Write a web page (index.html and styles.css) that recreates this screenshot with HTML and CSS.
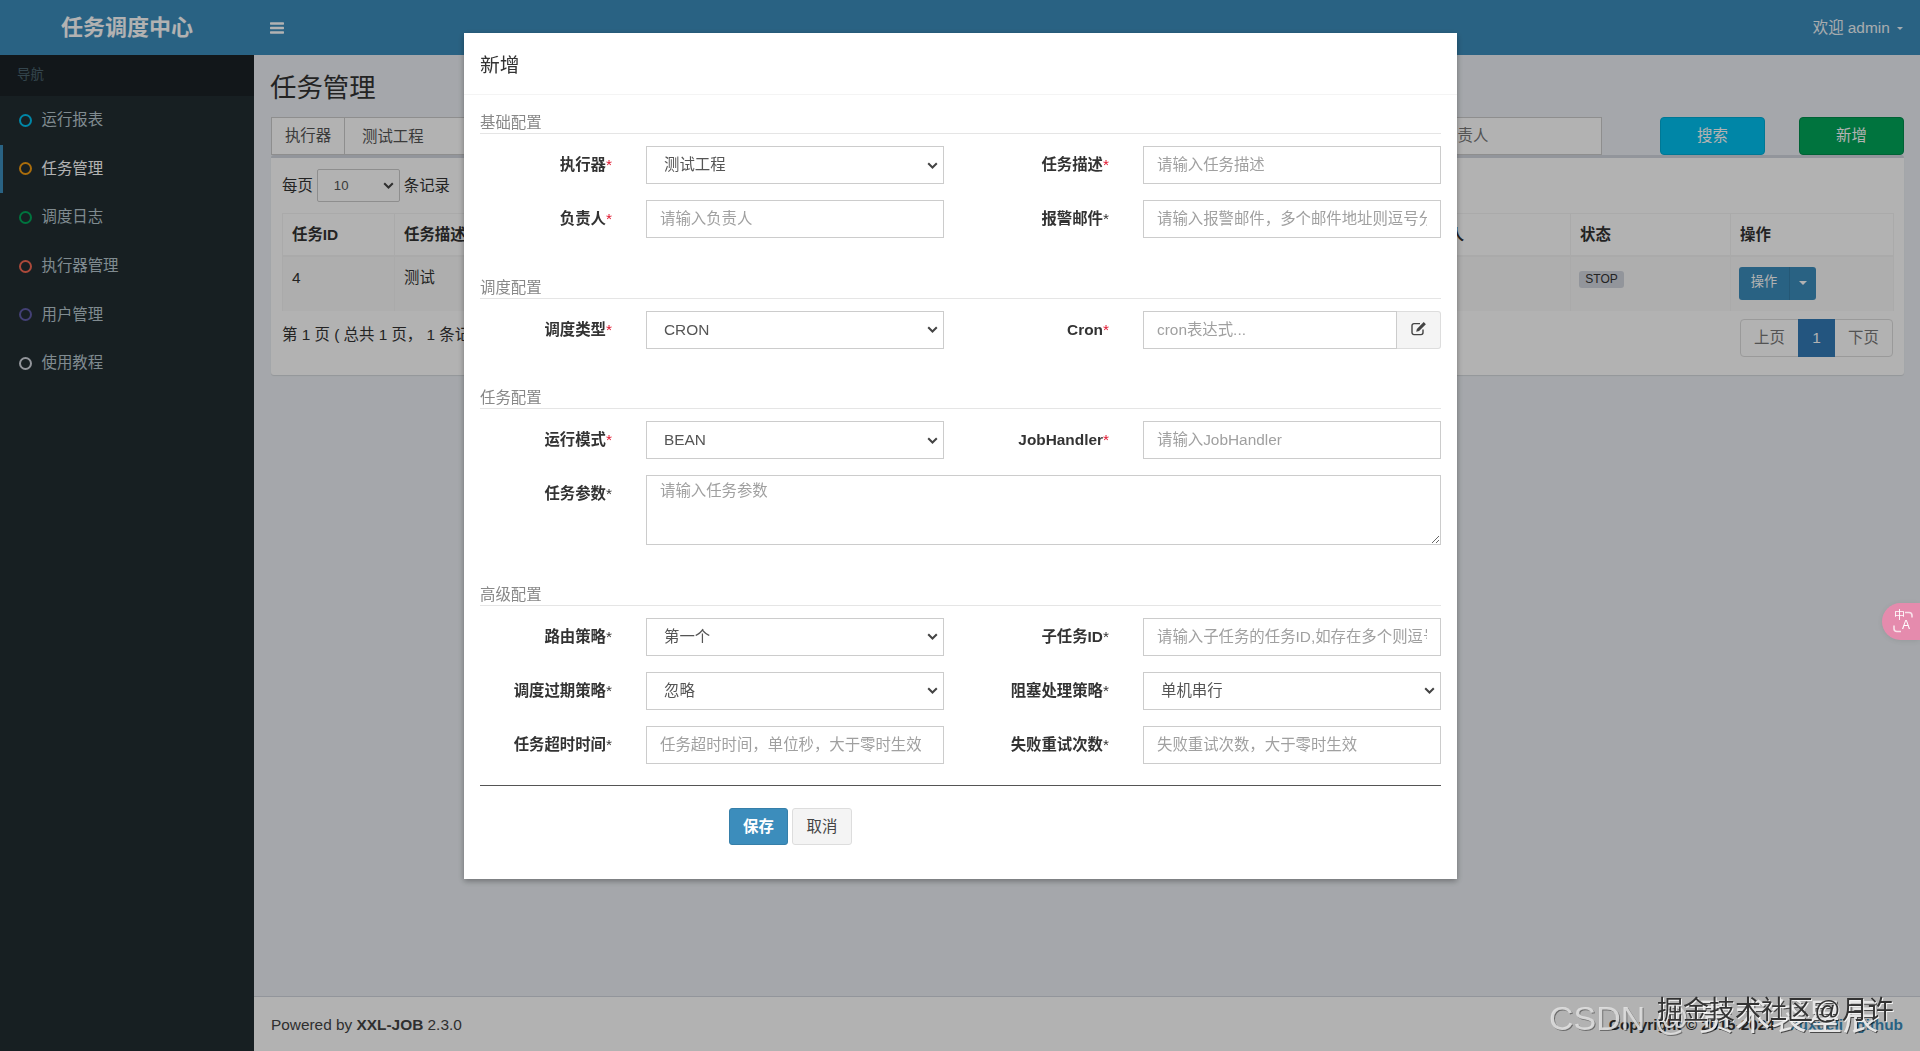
FILE: index.html
```html
<!DOCTYPE html>
<html lang="zh-CN">
<head>
<meta charset="utf-8">
<title>任务调度中心</title>
<link rel="stylesheet" href="styles.css">
</head>
<body>
<div class="app">
  <header class="topbar">
    <div class="logo">任务调度中心</div>
    <div class="navbar">
      <svg class="toggle" width="14" height="12" viewBox="0 0 14 12"><rect width="14" height="2.4" y="0.3" rx=".6"/><rect width="14" height="2.4" y="4.8" rx=".6"/><rect width="14" height="2.4" y="9.3" rx=".6"/></svg>
      <div class="user">欢迎 admin <span class="caret"></span></div>
    </div>
  </header>
  <div class="below">
    <aside class="sidebar">
      <div class="nav-head">导航</div>
      <ul class="menu">
        <li class="item"><i class="dot dot-aqua"></i>运行报表</li>
        <li class="item active"><i class="dot dot-orange"></i>任务管理</li>
        <li class="item"><i class="dot dot-green"></i>调度日志</li>
        <li class="item"><i class="dot dot-red"></i>执行器管理</li>
        <li class="item"><i class="dot dot-purple"></i>用户管理</li>
        <li class="item"><i class="dot dot-gray"></i>使用教程</li>
      </ul>
    </aside>
    <main class="main">
      <div class="content">
        <h1 class="page-title">任务管理</h1>
        <div class="filters">
          <div class="filter-groups">
            <div class="group"><span class="addon">执行器</span><select class="control"><option>测试工程</option></select></div>
            <div class="group"><span class="addon">状态</span><select class="control"><option>全部</option></select></div>
            <div class="group"><input class="control" placeholder="请输入任务描述"></div>
            <div class="group"><input class="control" placeholder="请输入JobHandler"></div>
            <div class="group"><input class="control" placeholder="请输入负责人"></div>
          </div>
          <button class="btn btn-search">搜索</button>
          <button class="btn btn-add">新增</button>
        </div>
        <section class="box">
          <div class="length"><span>每页</span><select class="length-select"><option>10</option></select><span>条记录</span></div>
          <table class="table">
            <thead>
              <tr><th class="c-id">任务ID</th><th class="c-desc">任务描述</th><th class="c-type">调度类型</th><th class="c-mode">运行模式</th><th class="c-owner">负责人</th><th class="c-status">状态</th><th class="c-op">操作</th></tr>
            </thead>
            <tbody>
              <tr>
                <td>4</td><td>测试</td><td>CRON</td><td>BEAN</td><td></td>
                <td><span class="label">STOP</span></td>
                <td><span class="split"><span class="split-main">操作</span><span class="split-caret"><span class="caret"></span></span></span></td>
              </tr>
            </tbody>
          </table>
          <div class="table-foot">
            <div class="info">第 1 页 ( 总共 1 页， 1 条记录 )</div>
            <div class="pager"><span class="page">上页</span><span class="page page-on">1</span><span class="page">下页</span></div>
          </div>
        </section>
      </div>
      <footer class="footer">
        <div>Powered by <b>XXL-JOB</b> 2.3.0</div>
        <div class="copy"><b>Copyright © 2015-2024</b><b class="links"><a>xuxueli</a><a>github</a></b></div>
      </footer>
    </main>
  </div>
</div>

<div class="backdrop"></div>

<div class="modal-layer">
  <div class="modal">
    <div class="modal-head">新增</div>
    <form class="modal-body">
      <h4 class="sec sec-first">基础配置</h4>
      <div class="fields">
        <label class="lbl">执行器<em>*</em></label>
        <select class="field"><option>测试工程</option></select>
        <label class="lbl">任务描述<em>*</em></label>
        <input class="field" placeholder="请输入任务描述">
        <label class="lbl">负责人<em>*</em></label>
        <input class="field" placeholder="请输入负责人">
        <label class="lbl">报警邮件<em class="dk">*</em></label>
        <input class="field" placeholder="请输入报警邮件，多个邮件地址则逗号分隔">
      </div>

      <h4 class="sec">调度配置</h4>
      <div class="fields">
        <label class="lbl">调度类型<em>*</em></label>
        <select class="field"><option>CRON</option></select>
        <label class="lbl">Cron<em>*</em></label>
        <div class="cron">
          <input class="field cron-input" placeholder="cron表达式...">
          <span class="cron-btn">
            <svg width="16" height="15" viewBox="0 0 16 15"><path d="M12 8.6V11.6a2 2 0 0 1-2 2H3a2 2 0 0 1-2-2V4.6a2 2 0 0 1 2-2h6" fill="none" stroke="#444" stroke-width="1.4"/><path d="M5.2 10.8l.7-2.9L12.7 1.1l2.2 2.2-6.8 6.8z" fill="#444"/></svg>
          </span>
        </div>
      </div>

      <h4 class="sec">任务配置</h4>
      <div class="fields">
        <label class="lbl">运行模式<em>*</em></label>
        <select class="field"><option>BEAN</option></select>
        <label class="lbl">JobHandler<em>*</em></label>
        <input class="field" placeholder="请输入JobHandler">
        <label class="lbl">任务参数<em class="dk">*</em></label>
        <textarea class="area" placeholder="请输入任务参数"></textarea>
      </div>

      <h4 class="sec">高级配置</h4>
      <div class="fields">
        <label class="lbl">路由策略<em class="dk">*</em></label>
        <select class="field"><option>第一个</option></select>
        <label class="lbl">子任务ID<em class="dk">*</em></label>
        <input class="field" placeholder="请输入子任务的任务ID,如存在多个则逗号分隔">
        <label class="lbl">调度过期策略<em class="dk">*</em></label>
        <select class="field"><option>忽略</option></select>
        <label class="lbl">阻塞处理策略<em class="dk">*</em></label>
        <select class="field"><option>单机串行</option></select>
        <label class="lbl">任务超时时间<em class="dk">*</em></label>
        <input class="field" placeholder="任务超时时间，单位秒，大于零时生效">
        <label class="lbl">失败重试次数<em class="dk">*</em></label>
        <input class="field" placeholder="失败重试次数，大于零时生效">
      </div>

      <hr class="rule">
      <div class="actions">
        <button type="button" class="act act-save">保存</button>
        <button type="button" class="act act-cancel">取消</button>
      </div>
    </form>
  </div>
</div>

<div class="translate">
  <span class="tr-zh">中</span><span class="tr-en">A</span>
  <svg class="tr-arc" width="24" height="24" viewBox="0 0 24 24"><path d="M14 2.5h4a3 3 0 0 1 3 3v2M10 21.5H6a3 3 0 0 1-3-3v-3" fill="none" stroke="#fff" stroke-width="1.6"/></svg>
</div>

<div class="mark mark-two">CSDN @ <span class="mark-big">贾术袋星辰</span></div>
<div class="mark mark-one">掘金技术社区 @ 月许</div>
</body>
</html>
```

FILE: styles.css
```css
* { box-sizing: border-box; }
html, body { margin: 0; height: 100%; }
body {
  font-family: "Liberation Sans", "Noto Sans CJK SC", sans-serif;
  font-size: 15.4px;
  line-height: 22px;
  color: #333;
  background: #ecf0f5;
  overflow: hidden;
}
button, input, select, textarea { font: inherit; }
ul { list-style: none; margin: 0; padding: 0; }
select.field, select.length-select {
  appearance: none;
  background-image: url("data:image/svg+xml,%3Csvg xmlns='http://www.w3.org/2000/svg' width='11' height='7' viewBox='0 0 11 7'%3E%3Cpath d='M1.2 1.2l4.3 4.3 4.3-4.3' fill='none' stroke='%23444' stroke-width='2'/%3E%3C/svg%3E");
  background-repeat: no-repeat;
  background-position: right 5px center;
}

.app { height: 1051px; display: flex; flex-direction: column; }

/* top bar */
.topbar { height: 55px; display: flex; background: #3c8dbc; color: #fff; flex: none; }
.logo { width: 254px; text-align: center; font-size: 22px; font-weight: 700; line-height: 55px; flex: none; }
.navbar { flex: 1; display: flex; align-items: center; justify-content: space-between; padding: 0 17px 0 16px; }
.toggle { fill: #fff; }
.user { font-size: 15.4px; color: #f0f6fa; }
.caret { display: inline-block; width: 0; height: 0; margin-left: 4px; vertical-align: middle; border-top: 4.4px solid; border-left: 4.4px solid transparent; border-right: 4.4px solid transparent; }
.user .caret { margin-left: 3px; border-top-width: 3.6px; border-left-width: 3.6px; border-right-width: 3.6px; }

.below { flex: 1; display: flex; min-height: 0; }

/* sidebar */
.sidebar { width: 254px; background: #222d32; flex: none; }
.nav-head { height: 41px; padding-left: 17px; line-height: 39px; font-size: 13.4px; color: #4b646f; background: #1a2226; }
.item { height: 48.6px; display: flex; align-items: center; border-left: 3px solid transparent; padding-left: 16px; color: #b8c7ce; }
.item.active { border-left-color: #3c8dbc; color: #fff; }
.dot { width: 13px; height: 13px; border-radius: 50%; border: 2.6px solid; margin-right: 9.5px; flex: none; }
.dot-aqua { border-color: #00c0ef; }
.dot-orange { border-color: #f39c12; }
.dot-green { border-color: #00a65a; }
.dot-red { border-color: #f56954; }
.dot-purple { border-color: #605ca8; }
.dot-gray { border-color: #d2d6de; }

/* main */
.main { flex: 1; display: flex; flex-direction: column; min-width: 0; }
.content { flex: 1; padding: 16px 16px 0 17px; }
.page-title { margin: 0 0 12px -1px; font-size: 26.4px; line-height: 34px; font-weight: 400; color: #333; }

.filters { display: flex; height: 38px; }
.filter-groups { width: 1331px; display: grid; grid-template-columns: 1fr 1fr 1fr 1fr 220px; column-gap: 16px; flex: none; margin-right: 58px; }
.group { display: flex; min-width: 0; }
.addon { width: 73px; flex: none; background: #fff; border: 1px solid #ccc; border-right: 0; text-align: center; line-height: 36px; color: #555; }
.control { flex: 1; min-width: 0; width: 100%; height: 38px; background: #fff; border: 1px solid #ccc; border-radius: 0; padding: 0 13px; color: #555; }
.control::placeholder { color: #777; opacity: 1; }
.btn { width: 105px; height: 38px; border: 1px solid; border-radius: 4px; color: #fff; flex: none; padding: 0; }
.btn-search { background: #00c0ef; border-color: #00acd6; }
.btn-add { background: #00a65a; border-color: #008d4c; margin-left: 34px; }

.box { height: 220px; background: #fff; border-top: 3px solid #d2d6de; border-radius: 3px; box-shadow: 0 1px 1px rgba(0,0,0,.1); padding: 11px 11px 0 11px; }
.length { display: flex; align-items: center; height: 33px; color: #333; }
.length-select { width: 83px; height: 33px; margin: 0 4px; padding: 0 16px; font-size: 13.2px; background-color: #fff; border: 1px solid #ccc; border-radius: 2px; color: #555; }

.table { width: 100%; margin-top: 11px; border-collapse: collapse; table-layout: fixed; }
.table th { height: 42px; padding: 2px 9px 0; text-align: left; font-weight: 700; border: 1px solid #f4f4f4; border-bottom-width: 2px; }
.table td { height: 55px; padding: 10px 9px; vertical-align: top; background: #f9f9f9; border-left: 1px solid #f4f4f4; border-right: 1px solid #f4f4f4; }
.c-id { width: 112px; }
.c-desc { width: 280px; }
.c-type { width: 280px; }
.c-mode { width: 454px; }
.c-owner { width: 162px; }
.c-status { width: 160px; }
.c-op { width: 163px; }
.label { display: block; width: 45px; height: 17px; margin: 4px 0 0 -1px; background: #d2d6de; border-radius: 3px; text-align: center; font-size: 12px; line-height: 17px; color: #333; }
.split { display: flex; width: 77px; height: 33px; margin-left: -1px; background: #3c8dbc; border-radius: 3px; color: #fff; line-height: 29px; }
.split-main { width: 51px; text-align: center; font-size: 13.2px; border-right: 1px solid #367fa9; }
.split-caret { flex: 1; text-align: center; line-height: 31px; }
.split-caret .caret { margin-left: 0; }

.table-foot { display: flex; justify-content: space-between; margin-top: 8px; }
.info { line-height: 31px; }
.pager { display: flex; height: 38px; border: 1px solid #ddd; border-radius: 4px; background: #fff; line-height: 36px; color: #777; }
.page { width: 57px; text-align: center; }
.page-on { width: 37px; margin: -1px 0; line-height: 38px; background: #337ab7; color: #fff; }

.footer { height: 55px; flex: none; display: flex; justify-content: space-between; align-items: center; background: #fff; border-top: 1px solid #d2d6de; padding: 2px 17px 0 17px; color: #444; }
.copy { color: #333; }
.links { margin-left: 15px; color: #3c8dbc; }
.links a { margin-right: 13px; }
.links a:last-child { margin-right: 0; }

/* modal */
.backdrop { position: fixed; inset: 0; background: rgba(0,0,0,.3); }
.modal-layer { position: fixed; inset: 0; display: flex; justify-content: center; padding-top: 33px; padding-left: 1px; }
.modal { width: 993px; height: 846px; background: #fff; box-shadow: 0 2px 6px rgba(0,0,0,.35); }
.modal-head { height: 62px; padding-left: 16px; line-height: 64px; font-size: 19.8px; color: #333; border-bottom: 1px solid #f4f4f4; }
.modal-body { padding: 16px 16px 0; }
.sec { height: 23px; margin: 37.5px 0 12px; font-size: 15.4px; line-height: 24px; font-weight: 400; color: #888; border-bottom: 1px solid #e5e5e5; }
.sec-first { margin-top: 0; }
.fields { display: grid; grid-template-columns: 132px 298px 131px 298px; column-gap: 34px; row-gap: 16px; }
.lbl { height: 38px; text-align: right; font-weight: 700; line-height: 37px; color: #333; white-space: nowrap; }
.lbl em { font-style: normal; font-weight: 400; color: #e0132c; }
.lbl em.dk { color: #333; }
.field { width: 298px; height: 38px; background-color: #fff; border: 1px solid #ccc; border-radius: 0; padding: 0 13px; color: #555; }
select.field { padding-left: 17px; }
.field::placeholder, .area::placeholder { color: #a0a0a0; opacity: 1; }
.cron { display: flex; }
.cron-input { flex: 1; width: auto; min-width: 0; }
.cron-btn { width: 44px; flex: none; display: flex; align-items: center; justify-content: center; background: #f4f4f4; border: 1px solid #ddd; border-left: 0; border-radius: 0 3px 3px 0; padding-bottom: 3px; }
.area { grid-column: 2 / -1; height: 70px; background: #fff; border: 1px solid #ccc; border-radius: 0; padding: 4px 13px; color: #555; line-height: 22px; }
.rule { margin: 21.5px 0 22px; border: 0; border-top: 1px solid #555; }
.actions { display: flex; gap: 4px; padding-left: 249px; }
.act { height: 37px; border: 1px solid; border-radius: 3px; padding: 0; }
.act-save { width: 59px; background: #3c8dbc; border-color: #367fa9; color: #fff; font-weight: 700; }
.act-cancel { width: 60px; background: #f4f4f4; border-color: #ddd; color: #444; }

/* floating translate button */
.translate { position: fixed; top: 603px; right: 0; width: 38px; height: 37px; background: #e58bad; border-radius: 19px 0 0 19px; color: #fff; box-shadow: 0 1px 6px rgba(0,0,0,.1); }
.tr-zh { position: absolute; left: 12px; top: 5px; font-size: 11px; line-height: 14px; }
.tr-en { position: absolute; left: 20px; top: 14px; font-size: 12px; line-height: 16px; }
.tr-arc { position: absolute; left: 9px; top: 7px; opacity: .75; }

/* image watermarks */
.mark { position: fixed; white-space: nowrap; }
.mark-one { left: 1657px; top: 991px; font-size: 26px; line-height: 38px; word-spacing: -6px; color: #333; text-shadow: 1px 1px 0 rgba(255,255,255,.85); }
.mark-two { left: 1549px; top: 996px; font-size: 34px; line-height: 44px; color: rgba(225,225,225,.9); text-shadow: 1px 1px 0 rgba(0,0,0,.4); }
.mark-big { font-size: 36px; color: #e6e6e6; text-shadow: 1px 1px 0 rgba(0,0,0,.6); }
```
